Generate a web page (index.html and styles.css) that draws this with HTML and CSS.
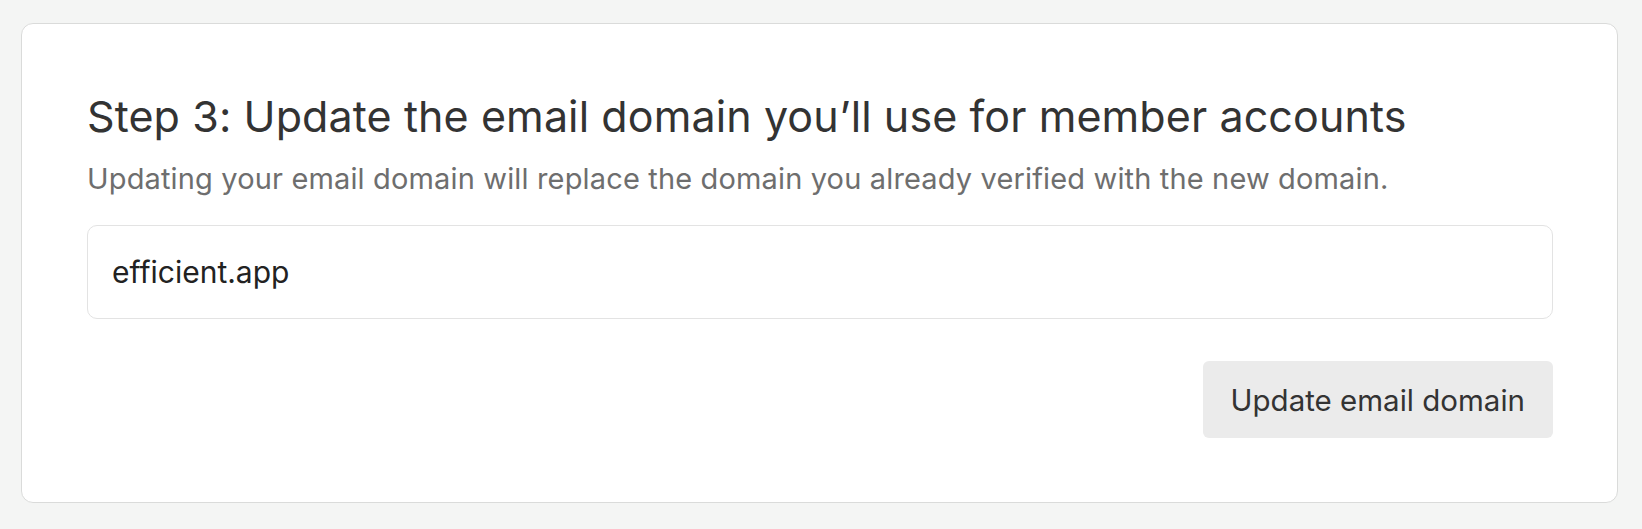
FILE: index.html
```html
<!DOCTYPE html>
<html lang="en">

<head>
    <meta charset="UTF-8">
    <meta name="viewport" content="width=device-width, initial-scale=1.0">
    <title>Email domain</title>
    <link rel="stylesheet" href="styles.css">
</head>

<body>

    <form class="card" id="domainForm">
        <h2 class="card-title">Step 3: Update the email domain you’ll use for member accounts</h2>
        <p class="card-desc">Updating your email domain will replace the domain you already verified with the new domain.</p>

        <input type="text" class="domain-input" id="domain" value="efficient.app">

        <div class="actions">
            <button type="submit" class="btn">Update email domain</button>
        </div>
    </form>

</body>

</html>
```

FILE: styles.css
```css
* {
    margin: 0;
    padding: 0;
    box-sizing: border-box;
}

body {
    font-family: Inter, "Noto Sans", sans-serif;
    background-color: #f4f5f4;
    padding: 23px 24px 0 21px;
}

.card {
    background-color: #fff;
    border: 1.5px solid #dadbda;
    border-radius: 12px;
    padding: 64px 64px 64px 65px;
    display: flex;
    flex-direction: column;
}

.card-title {
    font-size: 43px;
    font-weight: 400;
    line-height: 56px;
    letter-spacing: 0.1px;
    color: #333;
}

.card-desc {
    font-size: 29px;
    line-height: 40px;
    letter-spacing: 0.15px;
    color: #6e6e6e;
    margin-top: 15px;
}

.domain-input {
    margin-top: 26px;
    height: 94px;
    width: 100%;
    padding: 0 24px;
    font-family: inherit;
    font-size: 30px;
    color: #222;
    border: 1.5px solid #e3e3e3;
    border-radius: 10px;
    outline: none;
}

.actions {
    display: flex;
    justify-content: flex-end;
    margin-top: 42px;
}

.btn {
    background-color: #ebebeb;
    color: #333;
    font-family: inherit;
    font-size: 29.5px;
    height: 77px;
    padding: 0 28px;
    border: none;
    border-radius: 6px;
    cursor: pointer;
}
```
